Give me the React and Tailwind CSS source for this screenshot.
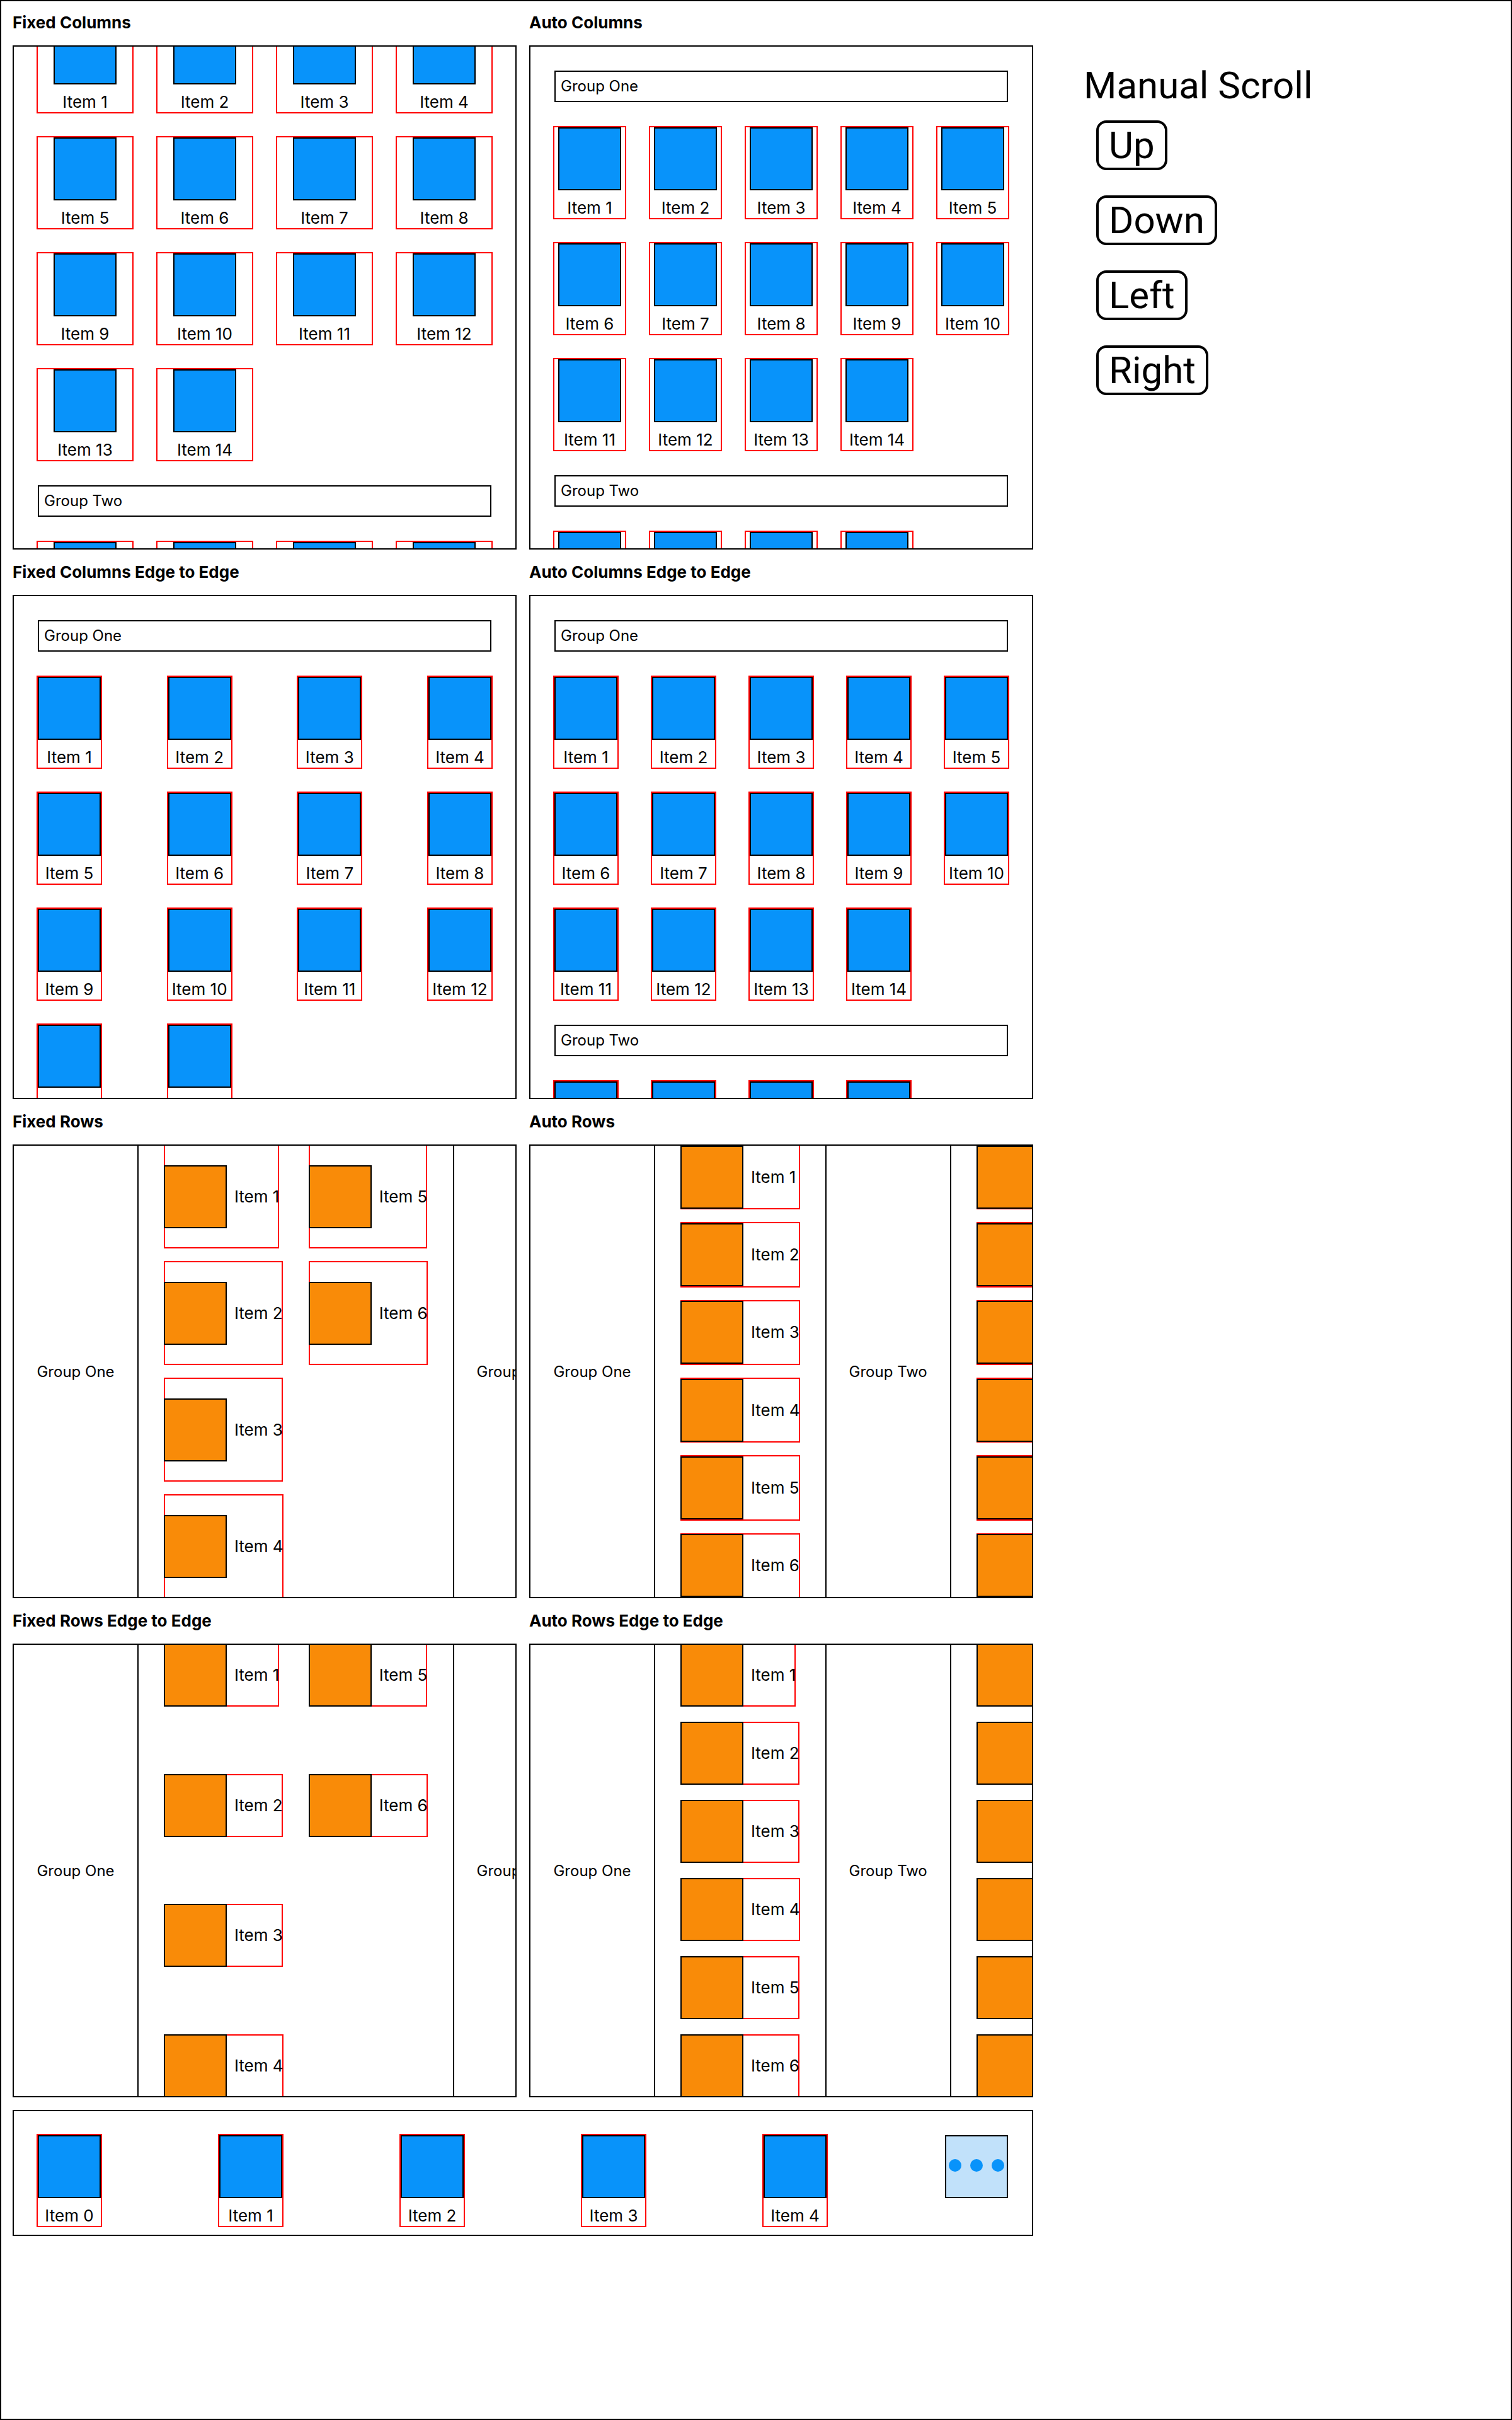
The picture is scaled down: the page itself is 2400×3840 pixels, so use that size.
import { useLayoutEffect, useRef } from "react";

const numbers = (from, to) =>
  Array.from({ length: to - from + 1 }, (_, i) => `Item ${from + i}`);

function ColumnItem({ label }) {
  return (
    <li className="flex min-w-0 flex-col items-center outline-2 outline-[#ff0000]">
      <div className="size-[100px] shrink-0 border-2 border-black bg-[#0893fa]" />
      <span className="mt-3 whitespace-nowrap text-[26px] leading-8">{label}</span>
    </li>
  );
}

function RowItem({ label }) {
  return (
    <li className="flex items-center whitespace-nowrap shadow-[inset_0_0_0_2px_#ff0000]">
      <div className="size-[100px] shrink-0 border-2 border-black bg-[#f98b08]" />
      <span className="ml-3 text-[26px] leading-8">{label}</span>
    </li>
  );
}

function Section({ title, children }) {
  return (
    <section className="min-w-0">
      <h2 className="py-5 text-[26px] leading-8 font-bold">{title}</h2>
      {children}
    </section>
  );
}

function ColumnGroup({ name, items, gridClass }) {
  return (
    <div className="flex flex-col gap-10">
      <h3 className="border-2 border-black p-2 text-2xl leading-[30px]">{name}</h3>
      <ul className={`grid gap-y-10 ${gridClass}`}>
        {items.map((label) => (
          <ColumnItem key={label} label={label} />
        ))}
      </ul>
    </div>
  );
}

function ColumnsPanel({ gridClass, panelRef }) {
  return (
    <div
      ref={panelRef}
      className="flex aspect-square flex-col gap-10 overflow-hidden border-2 border-black p-[38px]"
    >
      <ColumnGroup name="Group One" items={numbers(1, 14)} gridClass={gridClass} />
      <ColumnGroup name="Group Two" items={numbers(1, 4)} gridClass={gridClass} />
    </div>
  );
}

function RowsPanel({ gridClass, panelRef }) {
  return (
    <div
      ref={panelRef}
      className="flex aspect-[10/9] gap-10 overflow-hidden outline-2 -outline-offset-2 outline-black"
    >
      {["Group One", "Group Two"].map((name) => (
        <div key={name} className="flex h-full shrink-0 gap-10">
          <h3 className="flex w-[200px] items-center justify-center border-2 border-black pt-0.5 text-2xl leading-[30px]">
            {name}
          </h3>
          <ul className={`grid h-full grid-flow-col gap-x-10 ${gridClass}`}>
            {numbers(1, 6).map((label) => (
              <RowItem key={label} label={label} />
            ))}
          </ul>
        </div>
      ))}
    </div>
  );
}

function ScrollButton({ children, onClick }) {
  return (
    <button
      type="button"
      onClick={onClick}
      className="rounded-2xl border-4 border-black px-4 leading-[71px]"
    >
      {children}
    </button>
  );
}

export default function App() {
  const columns = useRef(null);
  const rows = useRef(null);

  useLayoutEffect(() => {
    columns.current.scrollTop = 168;
  }, []);

  return (
    <main className="grid min-h-screen grid-cols-[1620fr_680fr] content-start gap-x-20 bg-white pl-5 font-['Inter',sans-serif] text-black outline-2 -outline-offset-2 outline-black">
      <div className="min-w-0">
        <div className="grid grid-cols-2 gap-x-5">
          <Section title="Fixed Columns">
            <ColumnsPanel panelRef={columns} gridClass="grid-cols-4 gap-x-10" />
          </Section>
          <Section title="Auto Columns">
            <ColumnsPanel gridClass="grid-cols-[repeat(auto-fill,minmax(100px,1fr))] gap-x-10" />
          </Section>
          <Section title="Fixed Columns Edge to Edge">
            <ColumnsPanel gridClass="grid-cols-[repeat(4,100px)] justify-between" />
          </Section>
          <Section title="Auto Columns Edge to Edge">
            <ColumnsPanel gridClass="grid-cols-[repeat(auto-fill,100px)] gap-x-10 justify-between" />
          </Section>
          <Section title="Fixed Rows">
            <RowsPanel
              panelRef={rows}
              gridClass="grid-rows-4 gap-y-5 justify-items-start"
            />
          </Section>
          <Section title="Auto Rows">
            <RowsPanel gridClass="grid-rows-6 gap-y-5" />
          </Section>
          <Section title="Fixed Rows Edge to Edge">
            <RowsPanel gridClass="grid-rows-[repeat(4,100px)] content-between justify-items-start" />
          </Section>
          <Section title="Auto Rows Edge to Edge">
            <RowsPanel gridClass="grid-rows-[repeat(6,100px)] content-between justify-items-start" />
          </Section>
        </div>

        <div className="mt-5 flex items-start justify-between border-2 border-black px-[38px] pt-[38px] pb-3.5">
          <ul className="contents">
            {numbers(0, 4).map((label) => (
              <ColumnItem key={label} label={label} />
            ))}
          </ul>
          <button
            type="button"
            aria-label="More items"
            className="flex size-[100px] items-center justify-center gap-3.5 border-2 border-black bg-[#c1e1fa] pb-1"
          >
            <span className="size-5 shrink-0 rounded-full bg-[#0893fa]" />
            <span className="size-5 shrink-0 rounded-full bg-[#0893fa]" />
            <span className="size-5 shrink-0 rounded-full bg-[#0893fa]" />
          </button>
        </div>
      </div>

      <aside className="pt-[100px] font-['Roboto',sans-serif] text-[60px] leading-[71px]">
        <h2>Manual Scroll</h2>
        <div className="flex flex-col items-start gap-10 p-5">
          <ScrollButton onClick={() => columns.current.scrollBy(0, -100)}>Up</ScrollButton>
          <ScrollButton onClick={() => columns.current.scrollBy(0, 100)}>Down</ScrollButton>
          <ScrollButton onClick={() => rows.current.scrollBy(-100, 0)}>Left</ScrollButton>
          <ScrollButton onClick={() => rows.current.scrollBy(100, 0)}>Right</ScrollButton>
        </div>
      </aside>
    </main>
  );
}
